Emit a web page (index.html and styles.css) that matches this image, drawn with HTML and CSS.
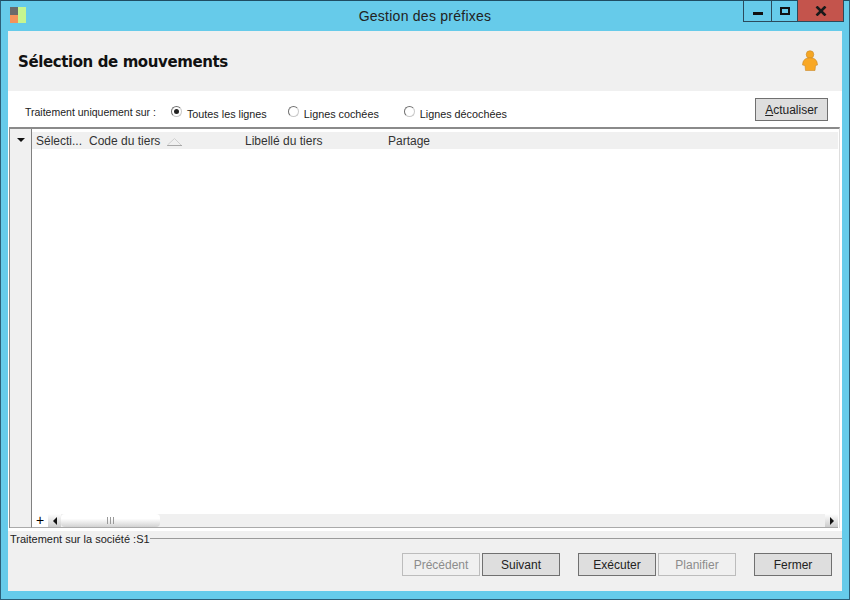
FILE: index.html
```html
<!DOCTYPE html>
<html>
    <head>
        <meta charset="UTF-8">
        <title>Gestion des préfixes</title>
        <link rel="stylesheet" href="styles.css">
    </head>
    <body>
        <div class="window">
            <div class="titlebar">
                <div class="app-icon">
                    <span class="sq-grey"></span>
                    <span class="sq-green"></span>
                    <span class="sq-orange"></span>
                </div>
                <p class="title">Gestion des préfixes</p>
                <div class="controls">
                    <div class="ctl ctl-min"><span></span></div>
                    <div class="ctl ctl-max"><span></span></div>
                    <div class="ctl ctl-close">
                        <svg width="12" height="10" viewBox="0 0 12 10">
                            <path d="M1.5 0.5 L10.5 9.5 M10.5 0.5 L1.5 9.5" stroke="#1a1a1a" stroke-width="2.6" fill="none"/>
                        </svg>
                    </div>
                </div>
            </div>
            <div class="content">
                <div class="header">
                    <h1>Sélection de mouvements</h1>
                    <svg class="person" width="18" height="22" viewBox="0 0 18 22">
                        <circle cx="9" cy="4.500" r="3.800" fill="#f5a623" stroke="#c98a2a" stroke-width="0.6"/>
                        <path d="M5 8.500 Q9 7 13 8.500 Q16.500 10 16.500 15 L14.500 15.500 L14 20.500 L4.500 20.500 L4 15.500 L1.500 15 Q1.500 10 5 8.500 Z" fill="#f9a825" stroke="#c98a2a" stroke-width="0.6"/>
                    </svg>
                </div>
                <div class="options">
                    <span class="opt-label">Traitement uniquement sur :</span>
                    <label class="radio radio-1"><span class="dot checked"></span>Toutes les lignes</label>
                    <label class="radio radio-2"><span class="dot"></span>Lignes cochées</label>
                    <label class="radio radio-3"><span class="dot"></span>Lignes décochées</label>
                    <button class="btn btn-refresh"><u>A</u>ctualiser</button>
                </div>
                <div class="grid">
                    <div class="grid-side">
                        <div class="side-head"><span class="arrow-down"></span></div>
                    </div>
                    <div class="grid-main">
                        <div class="grid-head">
                            <span class="col col-1">Sélecti...</span>
                            <span class="col col-2">Code du tiers</span>
                            <svg class="sort" width="15" height="8" viewBox="0 0 15 8">
                                <path d="M0 7.500 L15 7.500" fill="none" stroke="#a8a8a8"/>
                                <path d="M0.500 7 L7.500 0.500 L14 7" fill="none" stroke="#d0d0d0"/>
                            </svg>
                            <span class="col col-3">Libellé du tiers</span>
                            <span class="col col-4">Partage</span>
                        </div>
                        <div class="grid-body"></div>
                        <div class="scrollbar">
                            <div class="plus">+</div>
                            <div class="sb-btn"><span class="arrow-left"></span></div>
                            <div class="sb-track">
                                <div class="sb-thumb"><span class="grip"></span></div>
                            </div>
                            <div class="sb-btn sb-right"><span class="arrow-right"></span></div>
                        </div>
                    </div>
                </div>
                <div class="footer">
                    <div class="society">
                        <span>Traitement sur la société :S1</span>
                        <div class="rule"></div>
                    </div>
                    <div class="actions">
                        <button class="btn btn-wide" disabled>Précédent</button>
                        <button class="btn btn-wide">Suivant</button>
                        <button class="btn btn-wide gap-left">Exécuter</button>
                        <button class="btn btn-wide" disabled>Planifier</button>
                        <button class="btn btn-wide gap-left">Fermer</button>
                    </div>
                </div>
            </div>
        </div>
    </body>
</html>
```

FILE: styles.css
```css
*{
    box-sizing: border-box;
    font-family: "Liberation Sans", sans-serif;
}

body{
    margin: 0;
    background-color: #66cbea;
}

p, h1{
    margin: 0;
}

.window{
    width: 850px;
    height: 600px;
    background-color: #66cbea;
    border: 1px solid #2c5f78;
    border-top-color: #1f4d63;
    display: flex;
    flex-direction: column;
}

.titlebar{
    height: 30px;
    flex: none;
    position: relative;
    display: flex;
    justify-content: center;
    padding-top: 6px;
}

.title{
    font-size: 14px;
    line-height: 18px;
    color: #222;
    letter-spacing: 0.25px;
}

.app-icon{
    position: absolute;
    left: 9px;
    top: 6px;
    width: 17px;
    height: 17px;
}

.app-icon span{
    position: absolute;
}

.sq-grey{
    left: 0;
    top: 0;
    width: 8px;
    height: 8px;
    background-color: #6a6a6a;
}

.sq-orange{
    left: 0;
    top: 8px;
    width: 8px;
    height: 8px;
    background-color: #f4935a;
}

.sq-green{
    left: 8px;
    top: 0;
    width: 8px;
    height: 16px;
    background-color: #c6f58f;
}

.controls{
    position: absolute;
    right: 5px;
    top: -1px;
    height: 22px;
    display: flex;
    border: 1px solid #2b4a5c;
    border-top: none;
}

.ctl{
    height: 21px;
    display: flex;
    align-items: center;
    justify-content: center;
}

.ctl-min{
    width: 28px;
    border-right: 1px solid #2b4a5c;
}

.ctl-min span{
    width: 10px;
    height: 3px;
    background-color: #111;
    margin-top: 5px;
}

.ctl-max{
    width: 26px;
    border-right: 1px solid #2b4a5c;
}

.ctl-max span{
    width: 10px;
    height: 8px;
    border: 2px solid #111;
}

.ctl-close{
    width: 45px;
    background-color: #c4544c;
}

.content{
    margin: 0 7px 8px 7px;
    flex: 1;
    display: flex;
    flex-direction: column;
    background-color: white;
    min-height: 0;
}

.header{
    height: 60px;
    flex: none;
    background-color: #f0f0f0;
    display: flex;
    align-items: center;
    justify-content: space-between;
    padding: 0 23px 0 10px;
}

.header h1{
    font-family: "DejaVu Sans", sans-serif;
    font-size: 15px;
    letter-spacing: -0.4px;
    font-weight: bold;
    color: #111;
    padding-top: 2px;
}

.options{
    height: 36px;
    flex: none;
    position: relative;
    display: flex;
    align-items: center;
    font-size: 10.800px;
    color: #222;
}

.opt-label{
    margin-left: 17px;
    margin-top: 6px;
    font-size: 10.500px;
}

.radio{
    display: flex;
    align-items: center;
    gap: 5px;
    margin-top: 9px;
}

.radio-1{
    margin-left: 15px;
}

.radio-2{
    margin-left: 21px;
}

.radio-3{
    margin-left: 25px;
}

.dot{
    width: 11px;
    height: 11px;
    border-radius: 50%;
    border: 1px solid #707070;
    border-bottom-color: #c8c8c8;
    border-right-color: #c8c8c8;
    background-color: #fff;
    margin-top: -4px;
    display: flex;
    align-items: center;
    justify-content: center;
}

.dot.checked::after{
    content: "";
    width: 5px;
    height: 5px;
    border-radius: 50%;
    background-color: #222;
}

.btn{
    width: 78px;
    height: 23px;
    padding: 0;
    background-color: #dedede;
    border: 1px solid #707070;
    font-size: 12px;
    color: #222;
}

.btn:disabled{
    background-color: #f0f0f0;
    border-color: #bcbcbc;
    color: #8c8c8c;
}

.btn-refresh{
    position: absolute;
    right: 14px;
    top: 7px;
    width: 73px;
}

.grid{
    flex: 1;
    min-height: 0;
    display: flex;
    border-top: 2px solid #8a8a8a;
    border-left: 1px solid #8a8a8a;
    border-right: 1px solid #ddd;
    margin: 0 2px 3px 1px;
}

.grid-side{
    width: 22px;
    flex: none;
    background-color: #f0f0f0;
    border-right: 1px solid #808080;
    border-bottom: 1px solid #aaa;
}

.side-head{
    height: 20px;
    padding-top: 9px;
    padding-left: 7px;
}

.arrow-down{
    display: block;
    width: 0;
    height: 0;
    border-left: 4px solid transparent;
    border-right: 4px solid transparent;
    border-top: 4px solid #111;
}

.grid-main{
    flex: 1;
    min-width: 0;
    display: flex;
    flex-direction: column;
}

.grid-head{
    height: 17px;
    margin-top: 3px;
    margin-right: 1px;
    flex: none;
    position: relative;
    background-color: #f0f0f0;
    font-size: 12px;
    line-height: 19px;
    color: #333;
}

.col{
    position: absolute;
    top: 0;
    white-space: nowrap;
}

.col-1{
    left: 4px;
}

.col-2{
    left: 57px;
}

.col-3{
    left: 213px;
}

.col-4{
    left: 356px;
}

.sort{
    position: absolute;
    left: 135px;
    top: 6px;
}

.grid-body{
    flex: 1;
    min-height: 0;
}

.scrollbar{
    height: 14px;
    flex: none;
    margin-right: 1px;
    display: flex;
    align-items: center;
    background-color: #f0f0f0;
    border-bottom: 1px solid #aaa;
}

.plus{
    width: 16px;
    height: 13px;
    font-size: 14px;
    line-height: 12px;
    text-align: center;
    color: #000;
    background-color: #fff;
}

.sb-btn{
    width: 13px;
    height: 13px;
    background: linear-gradient(#fff, #ccc);
    display: flex;
    align-items: center;
    justify-content: center;
    flex: none;
}

.sb-track{
    flex: 1;
    height: 13px;
}

.sb-thumb{
    width: 99px;
    height: 13px;
    border-radius: 4px;
    background: linear-gradient(#fff 35%, #d2d2d2);
    display: flex;
    align-items: center;
    justify-content: center;
}

.grip{
    width: 7px;
    height: 7px;
    background: repeating-linear-gradient(90deg, #999 0 1px, transparent 1px 3px);
}

.arrow-left{
    width: 0;
    height: 0;
    border-top: 4px solid transparent;
    border-bottom: 4px solid transparent;
    border-right: 4px solid #111;
}

.arrow-right{
    width: 0;
    height: 0;
    border-top: 4px solid transparent;
    border-bottom: 4px solid transparent;
    border-left: 4px solid #111;
}

.footer{
    height: 60px;
    flex: none;
    background-color: #f0f0f0;
}

.society{
    display: flex;
    align-items: center;
    padding-left: 2px;
    height: 15px;
    font-size: 11px;
    color: #222;
}

.rule{
    flex: 1;
    height: 1px;
    background-color: #9a9a9a;
}

.actions{
    display: flex;
    justify-content: flex-end;
    gap: 2px;
    padding-right: 10px;
    margin-top: 7px;
}

.gap-left{
    margin-left: 16px;
}
```
